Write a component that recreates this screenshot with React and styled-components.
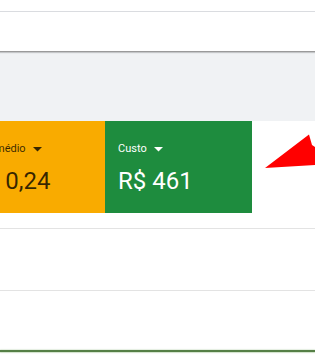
import React from 'react';
import styled, { createGlobalStyle } from 'styled-components';

const GlobalStyle = createGlobalStyle`
  html, body {
    margin: 0;
    padding: 0;
    background: #fff;
    font-family: Roboto, 'Liberation Sans', Arial, sans-serif;
  }
`;

const Page = styled.div`
  position: relative;
  width: 100%;
  height: 359px;
  overflow: hidden;
  background: #fff;
`;

const TopStrip = styled.div`
  height: 11px;
  border-bottom: 1px solid #dadce0;
`;

const Toolbar = styled.div`
  height: 39px;
  border-bottom: 1px solid #9a9a9a;
  box-shadow: 0 1px 1px rgba(0, 0, 0, 0.18);
  position: relative;
  z-index: 1;
`;

const GrayBand = styled.div`
  height: 69px;
  background: #f0f2f4;
`;

const ScoreSection = styled.section`
  padding-bottom: 15px;
  border-bottom: 1px solid #e3e3e3;
`;

const CardRow = styled.div`
  display: flex;
  margin-left: -42px;
`;

const Card = styled.div`
  width: 147px;
  height: 92px;
  box-sizing: border-box;
  padding: 20px 0 0 13px;
  background: ${({ $bg }) => $bg};
  color: ${({ $fg }) => $fg};
  white-space: nowrap;
`;

const Label = styled.div`
  display: flex;
  align-items: center;
  gap: 7px;
  font-size: 11px;
  line-height: 16px;
`;

const Value = styled.div`
  margin-top: 8px;
  font-size: 24px;
  line-height: 32px;
`;

const TableRow = styled.div`
  height: 61px;
  border-bottom: 1px solid #e3e3e3;
`;

const Spacer = styled.div`
  height: 59px;
`;

const ChartLine = styled.div`
  height: 2px;
  background: #557f46;
  box-shadow: 0 1px 1px rgba(120, 170, 100, 0.35), 0 -1px 1px rgba(120, 170, 100, 0.2);
`;

const Annotation = styled.svg`
  position: absolute;
  left: 255px;
  top: 130px;
  width: 60px;
  height: 40px;
`;

const Caret = () => (
  <svg width="9" height="5" viewBox="0 0 9 5">
    <polygon points="0,0 9,0 4.5,4.5" fill="currentColor" />
  </svg>
);

const cards = [
  { label: 'CPC médio', value: 'R$ 0,24', bg: '#f9ab00', fg: 'rgba(0,0,0,0.78)' },
  { label: 'Custo', value: 'R$ 461', bg: '#1e8c3e', fg: '#fff' },
];

export default function App() {
  return (
    <Page>
      <GlobalStyle />
      <TopStrip />
      <Toolbar />
      <GrayBand />
      <ScoreSection>
        <CardRow>
          {cards.map((c) => (
            <Card key={c.label} $bg={c.bg} $fg={c.fg}>
              <Label>
                {c.label}
                <Caret />
              </Label>
              <Value>{c.value}</Value>
            </Card>
          ))}
        </CardRow>
      </ScoreSection>
      <TableRow />
      <Spacer />
      <ChartLine />
      <Annotation viewBox="0 0 60 40">
        <polygon points="10,38 54,4.5 57,15 60,17 60,35" fill="#f00" />
      </Annotation>
    </Page>
  );
}
